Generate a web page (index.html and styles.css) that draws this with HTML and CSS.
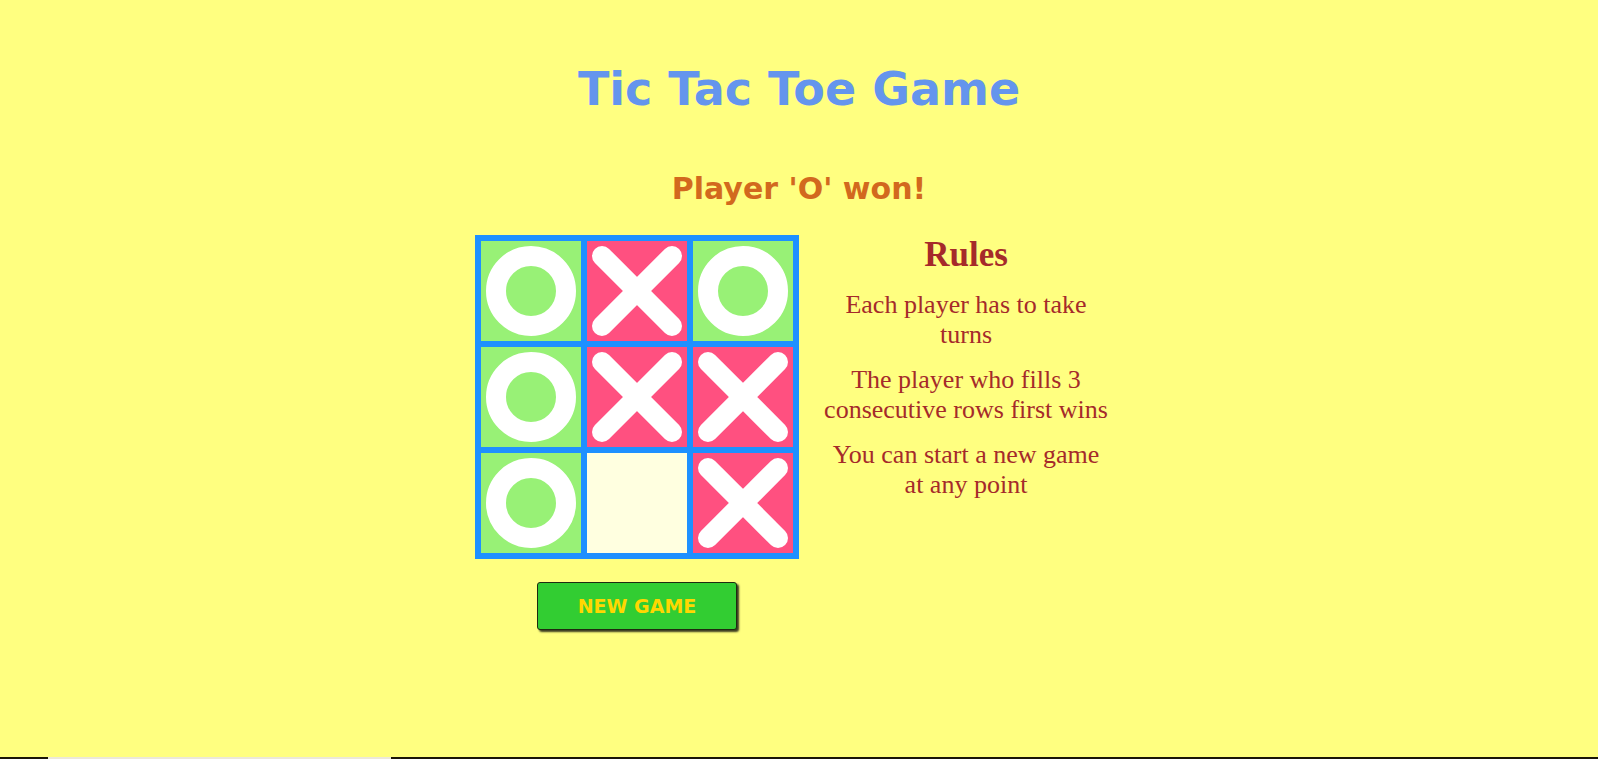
FILE: index.html
```html
<!DOCTYPE html>
<html lang="en">
<head>
<meta charset="utf-8">
<title>Tic Tac Toe Game</title>
<link rel="stylesheet" href="styles.css">
</head>
<body>
<h1 class="title">Tic Tac Toe Game</h1>
<div class="status">Player 'O' won!</div>
<main class="game">
  <section class="play">
    <div class="board">
      <div class="cell o"><span class="ring"></span></div>
      <div class="cell x"><svg class="cross" viewBox="0 0 100 100"><line x1="15" y1="15" x2="85" y2="85"/><line x1="85" y1="15" x2="15" y2="85"/></svg></div>
      <div class="cell o"><span class="ring"></span></div>
      <div class="cell o"><span class="ring"></span></div>
      <div class="cell x"><svg class="cross" viewBox="0 0 100 100"><line x1="15" y1="15" x2="85" y2="85"/><line x1="85" y1="15" x2="15" y2="85"/></svg></div>
      <div class="cell x"><svg class="cross" viewBox="0 0 100 100"><line x1="15" y1="15" x2="85" y2="85"/><line x1="85" y1="15" x2="15" y2="85"/></svg></div>
      <div class="cell o"><span class="ring"></span></div>
      <div class="cell empty"></div>
      <div class="cell x"><svg class="cross" viewBox="0 0 100 100"><line x1="15" y1="15" x2="85" y2="85"/><line x1="85" y1="15" x2="15" y2="85"/></svg></div>
    </div>
    <button class="new-game" type="button">NEW GAME</button>
  </section>
  <aside class="rules">
    <h2 class="rules-title">Rules</h2>
    <p class="rule">Each player has to take turns</p>
    <p class="rule">The player who fills 3 consecutive rows first wins</p>
    <p class="rule">You can start a new game at any point</p>
  </aside>
</main>
<div class="bottom-strip"><span class="strip-thumb"></span></div>
</body>
</html>
```

FILE: styles.css
```css
html, body {
  margin: 0;
  padding: 0;
}
body {
  background: #ffff80;
  min-height: 759px;
}
.title {
  margin: 63px 0 0;
  text-align: center;
  font-family: "Comic Sans MS", "DejaVu Sans", sans-serif;
  font-weight: bold;
  font-size: 46px;
  line-height: 52px;
  color: #6495ed;
}
.status {
  margin-top: 57px;
  text-align: center;
  font-family: Verdana, "DejaVu Sans", sans-serif;
  font-weight: bold;
  font-size: 30px;
  line-height: 34px;
  color: #d2691e;
}
.game {
  margin-top: 29px;
  display: flex;
  justify-content: center;
  align-items: flex-start;
  gap: 22px;
}
.play {
  display: flex;
  flex-direction: column;
  align-items: center;
  gap: 23px;
}
.board {
  display: grid;
  grid-template-columns: repeat(3, 100px);
  grid-template-rows: repeat(3, 100px);
  gap: 6px;
  padding: 6px;
  background: #1e90ff;
}
.cell {
  display: flex;
  align-items: center;
  justify-content: center;
}
.cell.o { background: #98f176; }
.cell.x { background: #ff5080; }
.cell.empty { background: #ffffe0; }
.ring {
  width: 50px;
  height: 50px;
  border: 20px solid #ffffff;
  border-radius: 50%;
}
.cross {
  width: 100px;
  height: 100px;
  display: block;
}
.cross line {
  stroke: #ffffff;
  stroke-width: 20;
  stroke-linecap: round;
}
.new-game {
  width: 200px;
  height: 48px;
  margin: 0;
  padding: 0;
  background: #32cd32;
  border: 1px solid #1f2a10;
  border-radius: 3px;
  box-shadow: 2px 2px 2px #3a3a20;
  font-family: "Comic Sans MS", "DejaVu Sans", sans-serif;
  font-weight: bold;
  font-size: 19px;
  color: #ffd700;
  cursor: pointer;
}
.rules {
  width: 290px;
  padding-right: 12px;
  text-align: center;
  font-family: "Times New Roman", "Liberation Serif", serif;
  color: #a52a2a;
}
.rules-title {
  margin: 0 0 15px;
  font-size: 35px;
  font-weight: bold;
  line-height: 40px;
}
.rule {
  margin: 0 0 15px;
  font-size: 26px;
  line-height: 30px;
}
.bottom-strip {
  position: fixed;
  left: 0;
  right: 0;
  bottom: 0;
  height: 2px;
  background: #1a1508;
}
.strip-thumb {
  position: absolute;
  left: 48px;
  width: 343px;
  top: 0;
  bottom: 0;
  background: #ece8d8;
}
```
